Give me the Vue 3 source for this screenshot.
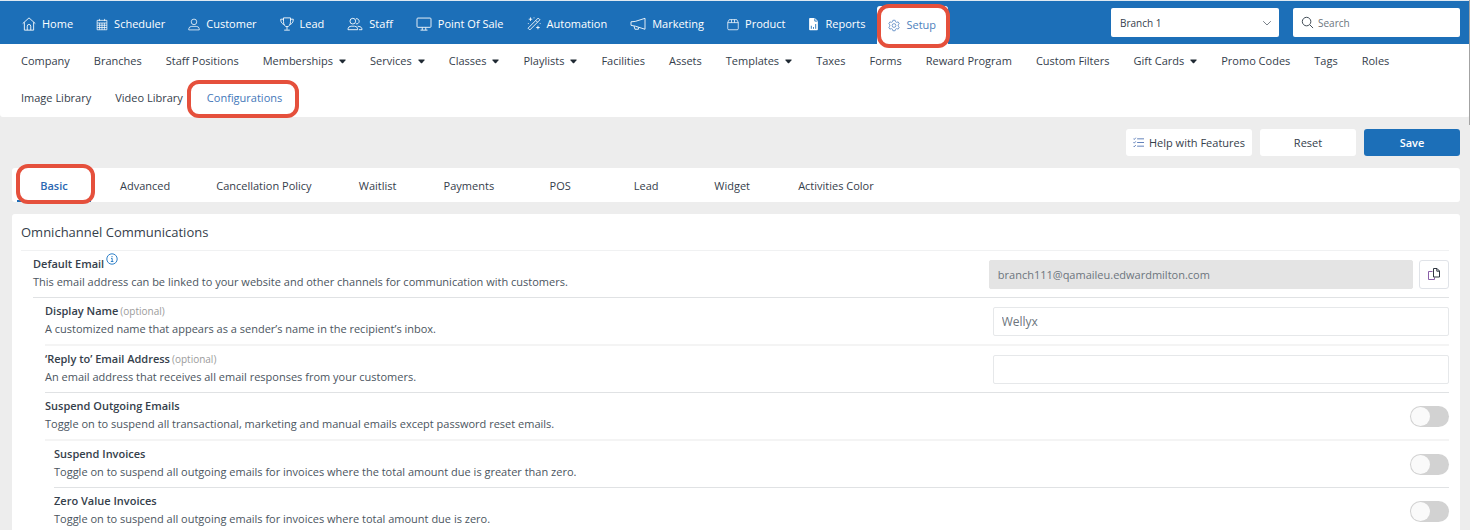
<template>
    <div class="page">
        <header class="topbar">
            <nav class="main-nav" aria-label="Main">
                <a v-for="item in mainNav" :key="item.label" href="#" class="main-link"
                    :class="{ active: item.active, marked: item.active }" @click.prevent>
                    <svg class="icon" :class="item.size" :viewBox="item.box || '0 0 16 16'" aria-hidden="true">
                        <path v-if="item.solid" class="solid" :d="item.solid" />
                        <path v-for="d in item.paths" :key="d" :class="{ cutout: item.solid }" :d="d" />
                    </svg>
                    <span>{{ item.label }}</span>
                </a>
            </nav>

            <div class="topbar-tools">
                <div class="branch">
                    <select v-model="branch" aria-label="Branch">
                        <option>Branch 1</option>
                    </select>
                    <svg class="chevron" viewBox="0 0 10 10" aria-hidden="true">
                        <path d="M1.2 3.2L5 7l3.800-3.800" />
                    </svg>
                </div>
                <label class="search">
                    <svg viewBox="0 0 14 14" aria-hidden="true">
                        <circle cx="6" cy="6" r="4.600" />
                        <path d="M9.500 9.500L13 13" />
                    </svg>
                    <input v-model="query" type="text" placeholder="Search" aria-label="Search">
                </label>
            </div>
        </header>

        <nav class="sub-nav" aria-label="Setup">
            <a v-for="item in subNav" :key="item.label" href="#" class="sub-link"
                :class="{ active: item.active, marked: item.active }" @click.prevent>
                {{ item.label }}
                <svg v-if="item.menu" class="caret" viewBox="0 0 7 5" aria-hidden="true">
                    <path d="M.6.500h5.800q.5.300.1.800L4.200 4q-.7.700-1.400 0L.5 1.300Q.1.800.6.500z" />
                </svg>
            </a>
        </nav>

        <main class="content">
            <div class="actions">
                <button type="button" class="btn help">
                    <svg viewBox="0 0 12 12" aria-hidden="true">
                        <path d="M4.500 2H12M4.500 6H12M4.500 10H12M.5 1.800l.9.900L3 .8M.5 5.800l.9.900L3 4.800M.5 9.800l.9.900L3 8.800" />
                    </svg>
                    Help with Features
                </button>
                <button type="button" class="btn">Reset</button>
                <button type="button" class="btn primary">Save</button>
            </div>

            <div class="tabs" role="tablist">
                <button v-for="tab in tabs" :key="tab" type="button" role="tab" class="tab"
                    :class="{ active: tab === activeTab, marked: tab === activeTab }"
                    :aria-selected="tab === activeTab" @click="activeTab = tab">
                    {{ tab }}
                </button>
            </div>

            <section class="card">
                <h2>Omnichannel Communications</h2>

                <div v-for="row in settings" :key="row.id" class="row" :class="`level-${row.level}`">
                    <div class="row-text">
                        <div class="row-title">
                            <label :for="row.id">{{ row.title }}</label>
                            <span v-if="row.optional" class="optional">(optional)</span>
                            <svg v-if="row.info" class="info" viewBox="0 0 12 12" aria-hidden="true">
                                <circle cx="6" cy="6" r="5.200" />
                                <path d="M5 5.400h1.200v3M4.800 8.500h2.600M6 3v1.200" />
                            </svg>
                        </div>
                        <p>{{ row.text }}</p>
                    </div>

                    <div class="row-control">
                        <input v-if="row.type === 'toggle'" :id="row.id" v-model="row.value" type="checkbox"
                            role="switch" class="toggle">
                        <input v-else :id="row.id" v-model="row.value" type="text" class="field"
                            :disabled="row.type === 'copy'">
                        <button v-if="row.type === 'copy'" type="button" class="copy" aria-label="Copy email">
                            <svg viewBox="0 0 14 14" aria-hidden="true">
                                <path class="back" d="M5.500 4.500H1.500v8h6v-2" />
                                <path d="M6.500 1.500h3.500l2.500 2.500v6h-6zM9.800 1.500v2.700h2.700" />
                            </svg>
                        </button>
                    </div>
                </div>
            </section>
        </main>
        <div class="scroll-thumb"></div>
    </div>
</template>

<script setup>
import { ref } from 'vue'

const branch = ref('Branch 1')
const query = ref('')
const activeTab = ref('Basic')

const mainNav = [
    { label: 'Home', paths: ['M.8 7.500L8 1l7.200 6.500', 'M2.700 6v9h10.600V6', 'M6 15v-4.500a2 2 0 014 0V15'] },
    { label: 'Scheduler', size: 'sm', paths: ['M1.500 2.500h13v12.500h-13z', 'M1.500 6h13M1.500 9h13M1.500 12h13M4.800 6v9M8 6v9M11.200 6v9', 'M4.500.5v3M11.500.5v3'] },
    { label: 'Customer', size: 'sm', paths: ['M8 .8a3.500 3.500 0 100 7.400 3.500 3.500 0 000-7.400z', 'M1 15.200v-1.500Q1.500 10.500 5 10.500h6q3.500 0 4 3.200v1.500z'] },
    { label: 'Lead', paths: ['M4 1h8v4c0 4-1.500 6-4 6S4 9 4 5z', 'M4 2.500H.8c0 3.500 1.500 5.500 4 6M12 2.500h3.200c0 3.500-1.500 5.500-4 6', 'M8 11v3.500M4.800 15h6.400'] },
    { label: 'Staff', size: 'lg', box: '0 0 18 16', paths: ['M6.500 1.500a3 3 0 100 6.500 3 3 0 000-6.500z', 'M1 14.500v-1q.5-3 3.500-3h4q3 0 3.500 3v1z', 'M10 2a3 3 0 110 5.800', 'M12 10.500q4.500 0 5 3v1h-3.500'] },
    { label: 'Point Of Sale', size: 'lg', box: '0 0 18 16', paths: ['M2 1.200h14q1 0 1 1v8.600q0 1-1 1H2q-1 0-1-1V2.200q0-1 1-1z', 'M7 12v2.800M11 12v2.800M5 15h8'] },
    { label: 'Automation', paths: ['M1.200 12.800L12.800 1.200l2 2L3.200 14.800z', 'M10 4l2 2', 'M4 .5v4M2 2.500h4M12.500 10v4M10.500 12h4M8 .5v1M1 7.500h1M14.500 7.500h1'] },
    { label: 'Marketing', size: 'lg', box: '0 0 18 16', paths: ['M17 1.500v12.500L6 10.500 1 9.500V5.500L6 5z', 'M4.500 10.500l1 3.500h4V12'] },
    { label: 'Product', size: 'sm', paths: ['M1 5l2-3.500h10L15 5v8.500q0 1.500-1.500 1.500h-11Q1 15 1 13.500z', 'M1 5.500h14M6 1.500v4M10 1.500v4'] },
    { label: 'Reports', size: 'xs', box: '0 0 12 16', solid: 'M2 1h5.500L11 4.500V14q0 1-1 1H2q-1 0-1-1V2q0-1 1-1z', paths: ['M7.500 1.500v3.200h3', 'M3.500 10v3.500M6 11.500v2M8.500 8v5.500'] },
    { label: 'Setup', size: 'sm', active: true, paths: ['M6.500 1h3l.5 2 1.500.8 2-.6L15 5.800l-1.500 1.400v1.600L15 10.200l-1.500 2.600-2-.6-1.500.8-.5 2h-3L6 13l-1.500-.8-2 .6L1 10.200l1.500-1.400V7.200L1 5.800l1.500-2.600 2 .6L6 3z', 'M8 5.500a2.500 2.500 0 100 5 2.500 2.500 0 000-5z'] }
]

const subNav = [
    { label: 'Company' },
    { label: 'Branches' },
    { label: 'Staff Positions' },
    { label: 'Memberships', menu: true },
    { label: 'Services', menu: true },
    { label: 'Classes', menu: true },
    { label: 'Playlists', menu: true },
    { label: 'Facilities' },
    { label: 'Assets' },
    { label: 'Templates', menu: true },
    { label: 'Taxes' },
    { label: 'Forms' },
    { label: 'Reward Program' },
    { label: 'Custom Filters' },
    { label: 'Gift Cards', menu: true },
    { label: 'Promo Codes' },
    { label: 'Tags' },
    { label: 'Roles' },
    { label: 'Image Library' },
    { label: 'Video Library' },
    { label: 'Configurations', active: true }
]

const tabs = ['Basic', 'Advanced', 'Cancellation Policy', 'Waitlist', 'Payments', 'POS', 'Lead', 'Widget', 'Activities Color']

// level = indentation of the row under its parent setting
const settings = ref([
    {
        id: 'default-email', level: 1, type: 'copy', info: true, title: 'Default Email',
        text: 'This email address can be linked to your website and other channels for communication with customers.',
        value: 'branch111@qamaileu.edwardmilton.com'
    },
    {
        id: 'display-name', level: 2, type: 'text', optional: true, title: 'Display Name',
        text: 'A customized name that appears as a sender’s name in the recipient’s inbox.',
        value: 'Wellyx'
    },
    {
        id: 'reply-to', level: 2, type: 'text', optional: true, title: '‘Reply to’ Email Address',
        text: 'An email address that receives all email responses from your customers.',
        value: ''
    },
    {
        id: 'suspend-emails', level: 2, type: 'toggle', title: 'Suspend Outgoing Emails',
        text: 'Toggle on to suspend all transactional, marketing and manual emails except password reset emails.',
        value: false
    },
    {
        id: 'suspend-invoices', level: 3, type: 'toggle', title: 'Suspend Invoices',
        text: 'Toggle on to suspend all outgoing emails for invoices where the total amount due is greater than zero.',
        value: false
    },
    {
        id: 'zero-invoices', level: 3, type: 'toggle', title: 'Zero Value Invoices',
        text: 'Toggle on to suspend all outgoing emails for invoices where total amount due is zero.',
        value: false
    }
])
</script>

<style>
body {
    background: #ededed;
    overflow: hidden;
}
</style>

<style scoped>
.page {
    position: relative;
    font-family: "Open Sans", "Noto Sans", sans-serif;
    font-size: 11px;
    line-height: 18px;
    color: #35404b;
}

.page *,
.page *::after {
    box-sizing: border-box;
}

a {
    color: inherit;
    text-decoration: none;
}

button,
input,
select {
    font: inherit;
    color: inherit;
}

svg {
    fill: none;
    stroke: currentColor;
    flex: none;
}

/* top bar */
.topbar {
    display: flex;
    justify-content: space-between;
    gap: 16px;
    height: 44px;
    padding: 0 10px 0 11px;
    background: #1c6fb8;
    border-top: 1px solid #dfe9f2;
}

.main-nav {
    display: flex;
    align-items: flex-end;
}

.main-link {
    display: flex;
    align-items: center;
    gap: 6px;
    height: 38px;
    padding: 0 12px 2px 11px;
    color: #fff;
    font-weight: 500;
    white-space: nowrap;
}

.main-link.active {
    padding-bottom: 0;
    background: #fff;
    border-radius: 3px 3px 0 0;
    color: #4d7fbd;
}

.icon {
    width: 14px;
    height: 14px;
}

.icon.xs {
    width: 11px;
    height: 14px;
}

.icon.sm {
    width: 12px;
    height: 13px;
}

.icon.lg {
    width: 16px;
    height: 14px;
}

.icon .solid {
    fill: currentColor;
    stroke: none;
}

.icon .cutout {
    stroke: #1c6fb8;
}

.topbar-tools {
    display: flex;
    align-items: center;
    gap: 14px;
    font-size: 10px;
}

.branch {
    position: relative;
    width: 168px;
}

.branch select {
    display: block;
    width: 100%;
    height: 29px;
    padding: 0 9px;
    border: 0;
    border-radius: 2px;
    background: #fff;
    appearance: none;
}

.chevron {
    position: absolute;
    top: 10px;
    right: 7px;
    width: 10px;
    height: 10px;
    color: #7a828a;
    pointer-events: none;
}

.search {
    display: flex;
    align-items: center;
    gap: 4px;
    width: 167px;
    height: 29px;
    padding: 0 8px;
    border-radius: 2px;
    background: #fff;
}

.search svg {
    width: 13px;
    height: 13px;
}

.search input {
    width: 100%;
    min-width: 0;
    padding: 0;
    border: 0;
    outline: 0;
    background: none;
}

.search input::placeholder {
    color: #6c757d;
    opacity: 1;
}

/* second level navigation */
.sub-nav {
    display: flex;
    flex-wrap: wrap;
    row-gap: 1px;
    padding: 0 10px 0 9px;
    background: #fff;
    border-radius: 0 0 3px 3px;
}

.sub-link {
    display: flex;
    align-items: center;
    gap: 6px;
    height: 36px;
    padding: 0 12px 2px;
    white-space: nowrap;
}

.sub-link.active {
    color: #4377b9;
}

.caret {
    width: 7px;
    height: 5px;
    fill: #1f2933;
    stroke: none;
}

/* red callout around the current item of each level */
.marked {
    position: relative;
}

.marked::after {
    content: "";
    position: absolute;
    border: 4px solid #e5503c;
    border-radius: 12px;
    pointer-events: none;
}

.main-link.marked::after {
    inset: -2px -2px -4px 0;
}

.sub-link.marked::after {
    inset: -1px -5px -1px -8px;
}

.tab.marked::after {
    inset: -4px -4px -4px -1px;
}

/* page body */
.content {
    padding: 12px 10px 0 12px;
}

.actions {
    display: flex;
    justify-content: flex-end;
    gap: 8px;
}

.btn {
    display: flex;
    align-items: center;
    justify-content: center;
    gap: 5px;
    min-width: 96px;
    height: 27px;
    padding: 0 7px;
    border: 0;
    border-radius: 3px;
    background: #fff;
}

.btn svg {
    width: 11px;
    height: 11px;
    color: #5577b5;
}

.btn.primary {
    background: #1c6fb8;
    color: #fff;
    font-weight: 600;
}

.tabs {
    display: flex;
    gap: 12px;
    height: 34px;
    margin-top: 12px;
    padding: 0 5px;
    border-radius: 3px;
    background: #fff;
}

.tab {
    min-width: 74px;
    padding: 4px 17px 0;
    border: 0;
    border-bottom: 2px solid transparent;
    background: none;
    white-space: nowrap;
}

.tab.active {
    border-bottom-color: #1c6fb8;
    color: #2b68b2;
    font-weight: 600;
}

.card {
    margin-top: 12px;
    padding: 0 11px 0 9px;
    border-radius: 3px;
    background: #fff;
}

h2 {
    margin: 0;
    padding: 9px 0;
    border-bottom: 1px solid #f0f1f2;
    font-size: 13px;
    font-weight: 500;
    line-height: 18px;
}

.row {
    display: grid;
    grid-template-columns: 27fr 13fr;
    align-items: center;
    border-bottom: 1px solid #e0e2e4;
}

.row:nth-of-type(even) {
    border-bottom: 2px solid #f4f4f4;
}

.level-1 {
    margin-left: 12px;
}

.level-2 {
    margin-left: 24px;
}

.level-3 {
    margin-left: 33px;
}

.row-text {
    padding: 4px 0 6px;
}

.row-title {
    display: flex;
    align-items: center;
    gap: 2px;
    height: 18px;
    font-weight: 600;
}

.optional {
    color: #9b9b9b;
    font-size: 10px;
    font-weight: 400;
}

.info {
    align-self: flex-start;
    width: 12px;
    height: 12px;
    margin-top: -2px;
    color: #2f80c8;
}

p {
    margin: 0;
    color: #4b5560;
}

.row-control {
    display: flex;
    justify-content: flex-end;
    gap: 6px;
}

.field {
    flex: 1;
    min-width: 0;
    height: 29px;
    padding: 0 8px;
    border: 1px solid #e6e8ea;
    border-radius: 2px;
    background: #fff;
    color: #6c757d;
    font-size: 12px;
}

.field:disabled {
    border-color: #e4e4e4;
    background: #e4e4e4;
    font-size: 11px;
}

.copy {
    display: grid;
    place-items: center;
    width: 30px;
    height: 29px;
    padding: 0;
    border: 1px solid #e0e3e8;
    border-radius: 3px;
    background: #fff;
    color: #2f3640;
}

.copy svg {
    width: 14px;
    height: 14px;
}

.copy .back {
    stroke: #8a5fa8;
}

.toggle {
    appearance: none;
    width: 39px;
    height: 21px;
    margin: 0;
    padding: 1px;
    border-radius: 11px;
    background: #d2d2d2;
}

.toggle::before {
    content: "";
    display: block;
    width: 19px;
    height: 19px;
    border-radius: 50%;
    background: #fafafa;
}

.toggle:checked {
    background: #1c6fb8;
}

.toggle:checked::before {
    margin-left: auto;
}

.scroll-thumb {
    position: absolute;
    top: 0;
    right: 0;
    width: 1px;
    height: 125px;
    background: #a3a3a3;
}
</style>
